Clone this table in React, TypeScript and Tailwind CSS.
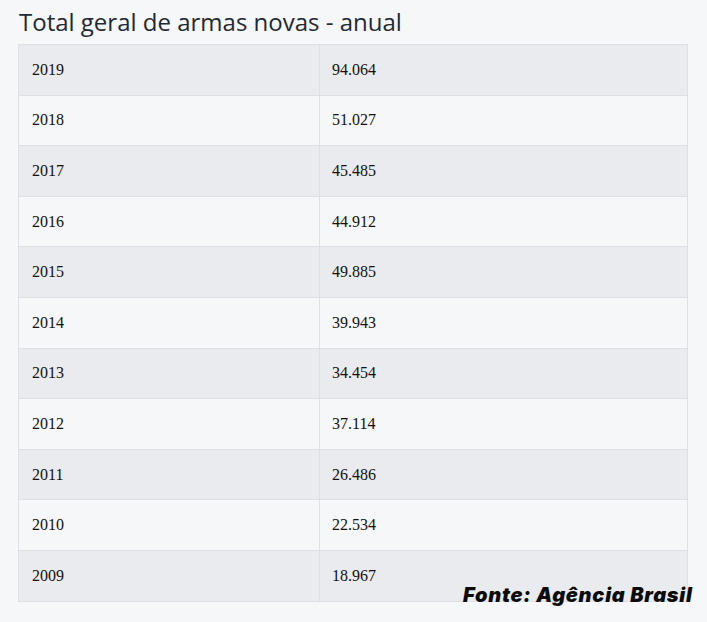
import React from 'react';

const rows: [string, string][] = [
  ['2019', '94.064'],
  ['2018', '51.027'],
  ['2017', '45.485'],
  ['2016', '44.912'],
  ['2015', '49.885'],
  ['2014', '39.943'],
  ['2013', '34.454'],
  ['2012', '37.114'],
  ['2011', '26.486'],
  ['2010', '22.534'],
  ['2009', '18.967'],
];

const App: React.FC = () => {
  return (
    <div className="relative w-[707px] h-[622px] bg-[#f6f7f9] pl-[18px] pt-[6px]">
      <h1 className="text-[24px] leading-[32px] text-[#1f2a33] font-['Open_Sans',sans-serif] pl-[1px] mb-[6px]">
        Total geral de armas novas - anual
      </h1>
      <table className="w-[670px] border-collapse font-['Liberation_Serif',serif] text-[16px] text-[#111]">
        <tbody>
          {rows.map(([year, value], i) => (
            <tr key={year} className={i % 2 === 0 ? 'bg-[#e9ebee]' : 'bg-[#f6f7f9]'}>
              <td className="w-[301px] h-[50.6px] border border-[#dde1e5] pl-[13px] align-middle">{year}</td>
              <td className="h-[50.6px] border border-[#dde1e5] pl-[12px] align-middle">{value}</td>
            </tr>
          ))}
        </tbody>
      </table>
      <div className="absolute left-[463px] top-[582px] text-[20px] leading-[26px] italic font-black text-[#0b0b0b] font-['Inter',sans-serif] tracking-[0.75px]">
        Fonte: Agência Brasil
      </div>
    </div>
  );
};

export default App;
